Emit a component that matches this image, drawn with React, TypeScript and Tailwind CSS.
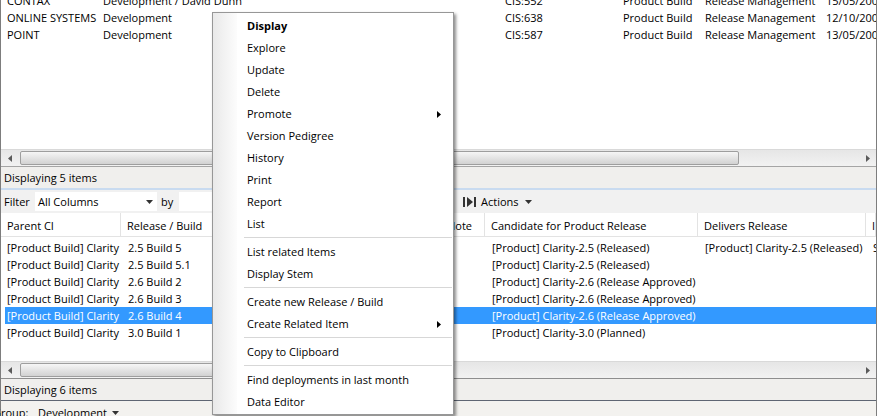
import React from 'react';

const topRows = [
  ['CONTAX', 'Development / David Dunn', 'CIS:552', 'Product Build', 'Release Management', '15/05/2008'],
  ['ONLINE SYSTEMS', 'Development', 'CIS:638', 'Product Build', 'Release Management', '12/10/2008'],
  ['POINT', 'Development', 'CIS:587', 'Product Build', 'Release Management', '13/05/2008'],
];
const topCols = ['w-[102px] pl-[6px]', 'w-[402px]', 'w-[118px]', 'w-[82px]', 'w-[121px]', 'flex-1'];

const gridCols = [
  'w-[120px]', 'w-[97px]', 'w-[112px]', 'w-[111px]', 'w-[44px]', 'w-[213px]', 'w-[168px]', 'flex-1',
];
const headers = ['Parent CI', 'Release / Build', 'Status', 'Owner', 'Note', 'Candidate for Product Release', 'Delivers Release', 'Implemented'];

const gridRows = [
  ['2.5 Build 5', '[Product] Clarity-2.5 (Released)', '[Product] Clarity-2.5 (Released)', 'S'],
  ['2.5 Build 5.1', '[Product] Clarity-2.5 (Released)', '', ''],
  ['2.6 Build 2', '[Product] Clarity-2.6 (Release Approved)', '', ''],
  ['2.6 Build 3', '[Product] Clarity-2.6 (Release Approved)', '', ''],
  ['2.6 Build 4', '[Product] Clarity-2.6 (Release Approved)', '', ''],
  ['3.0 Build 1', '[Product] Clarity-3.0 (Planned)', '', ''],
];

type MenuEntry = { label: string; bold?: boolean; sub?: boolean } | 'sep';
const menu: MenuEntry[] = [
  { label: 'Display', bold: true },
  { label: 'Explore' },
  { label: 'Update' },
  { label: 'Delete' },
  { label: 'Promote', sub: true },
  { label: 'Version Pedigree' },
  { label: 'History' },
  { label: 'Print' },
  { label: 'Report' },
  { label: 'List' },
  'sep',
  { label: 'List related Items' },
  { label: 'Display Stem' },
  'sep',
  { label: 'Create new Release / Build' },
  { label: 'Create Related Item', sub: true },
  'sep',
  { label: 'Copy to Clipboard' },
  'sep',
  { label: 'Find deployments in last month' },
  { label: 'Data Editor' },
];

function Arrow({ dir }: { dir: 'left' | 'right' }) {
  return (
    <svg width="4" height="7" viewBox="0 0 4 7">
      <path d={dir === 'left' ? 'M4 0 L0 3.5 L4 7 Z' : 'M0 0 L4 3.5 L0 7 Z'} fill="#5a5a5a" />
    </svg>
  );
}

function ScrollBar({ thumb }: { thumb: number }) {
  return (
    <div className="flex h-[17px] shrink-0 border-t border-[#d9d9d9] bg-gradient-to-b from-[#e6e6e6] to-[#f2f2f2]">
      <div className="flex w-[17px] items-center justify-center">
        <Arrow dir="left" />
      </div>
      <div className="flex-1 py-[1px] pl-[2px]">
        <div
          className="h-full rounded-[2px] border border-[#9e9e9e] bg-gradient-to-b from-[#f6f6f6] to-[#d2d2d2]"
          style={{ width: thumb }}
        />
      </div>
      <div className="flex w-[17px] items-center justify-center">
        <Arrow dir="right" />
      </div>
    </div>
  );
}

function ActionsIcon() {
  return (
    <svg width="14" height="10" viewBox="0 0 14 10">
      <rect x="0" y="0" width="2" height="10" fill="#333" />
      <path d="M4 0 L10 5 L4 10 Z" fill="#333" />
      <rect x="11" y="0" width="2" height="10" fill="#333" />
    </svg>
  );
}

function ContextMenu() {
  return (
    <div className="absolute left-[212px] top-[12px] w-[242px] border border-[#979797] bg-white pt-[2px] pb-[1px] shadow-[2px_2px_3px_rgba(0,0,0,0.45)]">
      <div className="absolute bottom-0 left-0 top-0 w-[24px] bg-gradient-to-r from-[#e9e9e9] to-[#fcfcfc]" />
      <div className="relative">
        {menu.map((m, i) =>
          m === 'sep' ? (
            <div key={i} className="py-[2px] pl-[31px] pr-[1px]">
              <div className="h-[1px] bg-[#d7d7d7]" />
              <div className="h-[1px] bg-white" />
            </div>
          ) : (
            <div key={i} className="flex h-[22px] items-center pl-[34px] pr-[12px]">
              <span className={m.bold ? 'flex-1 font-bold' : 'flex-1'}>{m.label}</span>
              {m.sub && (
                <svg width="4" height="7" viewBox="0 0 4 7">
                  <path d="M0 0 L4 3.5 L0 7 Z" fill="#000" />
                </svg>
              )}
            </div>
          ),
        )}
      </div>
    </div>
  );
}

export default function App() {
  return (
    <div className="relative h-[416px] w-[878px] overflow-hidden bg-white font-['Open_Sans',sans-serif] text-[11px] leading-[16px] text-black">
      <div className="flex h-full w-[877px] flex-col border-l border-r border-[#7d7d7d]">
        {/* upper list */}
        <div className="h-[149px] shrink-0 overflow-hidden bg-white">
          <div className="-mt-[8px]">
            {topRows.map((r, i) => (
              <div key={i} className="flex h-[17px] items-center whitespace-nowrap">
                {r.map((c, j) => (
                  <div key={j} className={topCols[j] + ' overflow-hidden'}>
                    {c}
                  </div>
                ))}
              </div>
            ))}
          </div>
        </div>
        <ScrollBar thumb={719} />
        <div className="flex h-[22px] shrink-0 items-center border-t border-[#a5a5a5] bg-[#f0efed] pl-[3px]">
          Displaying 5 items
        </div>
        <div className="h-[2px] shrink-0 bg-[#c9dbf0]" />

        {/* filter bar */}
        <div className="flex h-[23px] shrink-0 items-center bg-[#f1f1f1] pl-[3px]">
          <span className="w-[31px]">Filter</span>
          <div className="flex h-[19px] w-[122px] items-center bg-white pl-[3px]">
            <span className="flex-1">All Columns</span>
            <svg width="7" height="4" viewBox="0 0 7 4" className="mr-[4px]">
              <path d="M0 0 L7 0 L3.5 4 Z" fill="#333" />
            </svg>
          </div>
          <span className="ml-[4px] w-[18px]">by</span>
          <div className="h-[19px] w-[270px] bg-white" />
          <div className="ml-[14px] flex items-center gap-[4px]">
            <ActionsIcon />
            <span>Actions</span>
            <svg width="7" height="4" viewBox="0 0 7 4" className="ml-[2px]">
              <path d="M0 0 L7 0 L3.5 4 Z" fill="#333" />
            </svg>
          </div>
        </div>

        {/* grid header */}
        <div className="flex h-[24px] shrink-0 items-stretch whitespace-nowrap border-b border-[#e3e3e3] bg-white">
          {headers.map((h, i) => (
            <div
              key={i}
              className={gridCols[i] + ' flex items-center overflow-hidden border-r border-[#e3e3e3] pl-[6px] pt-[3px]'}
            >
              {h}
            </div>
          ))}
        </div>

        {/* grid rows */}
        <div className="flex-1 overflow-hidden bg-white pt-[2px]">
          {gridRows.map((r, i) => {
            const sel = i === 4;
            const cells = ['[Product Build] Clarity', r[0], '', '', '', r[1], r[2], r[3]];
            return (
              <div
                key={i}
                className={
                  'ml-[4px] flex h-[17px] items-center whitespace-nowrap ' +
                  (sel ? 'bg-[#3399ff] text-white' : '')
                }
              >
                {cells.map((c, j) => (
                  <div
                    key={j}
                    className={(j === 0 ? 'w-[116px] pl-[2px]' : gridCols[j] + ' pl-[7px]') + ' overflow-hidden'}
                  >
                    {c}
                  </div>
                ))}
              </div>
            );
          })}
        </div>

        <ScrollBar thumb={380} />
        <div className="flex h-[22px] shrink-0 items-center border-t border-[#8e8e8e] bg-[#f0efed] pl-[3px]">
          Displaying 6 items
        </div>
        <div className="h-[16px] shrink-0 border-t border-[#5f6673] bg-[#f3f2ef] pl-0 pt-[4px]">
          <div className="-ml-[8px] flex items-center whitespace-nowrap">
            <span className="w-[45px]">Group:</span>
            <span>Development</span>
            <svg width="7" height="4" viewBox="0 0 7 4" className="ml-[5px]">
              <path d="M0 0 L7 0 L3.5 4 Z" fill="#333" />
            </svg>
          </div>
        </div>
      </div>

      <ContextMenu />
    </div>
  );
}
